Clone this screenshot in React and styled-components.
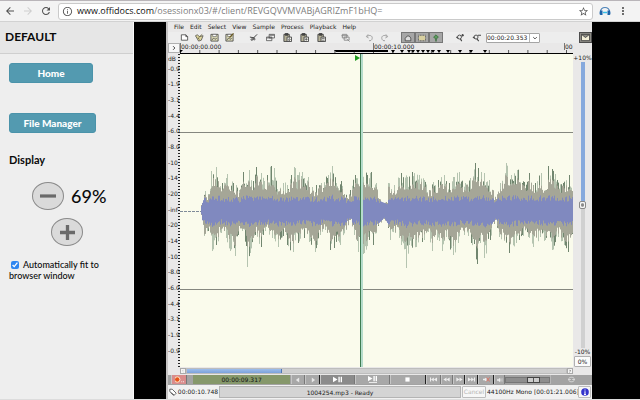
import React from 'react';
import styled, { createGlobalStyle } from 'styled-components';
import {
  MdArrowBack,
  MdArrowForward,
  MdRefresh,
  MdInfoOutline,
  MdStarBorder,
  MdMoreVert,
} from 'react-icons/md';

const GlobalStyle = createGlobalStyle`
  * {
    box-sizing: border-box;
  }

  body {
    margin: 0;
    background: #dcdcdc;
  }

  button, input, select {
    font: inherit;
    color: inherit;
    margin: 0;
    padding: 0;
  }
`;

const Page = styled.div`
  display: flex;
  flex-direction: column;
  height: 100vh;
  overflow: hidden;
  padding-bottom: 1px;
  font-family: Lato, 'Liberation Sans', sans-serif;
  color: #0a0a0a;
`;

/* ---------- browser bar ---------- */

const BrowserBar = styled.header`
  display: flex;
  align-items: center;
  flex: none;
  height: 22px;
  padding: 0 9px 0 2px;
  gap: 2px;
  background: #f3f3f3;
  border-top: 1px solid #b9b5b9;
  border-bottom: 1px solid #d2d2d2;
`;

const NavButton = styled.button`
  display: flex;
  align-items: center;
  justify-content: center;
  width: 16px;
  height: 16px;
  border: none;
  background: none;
  font-size: 12px;
  color: ${(attr) => (attr.$faded ? '#cfcfcf' : '#505050')};
`;

const AddressBox = styled.form`
  display: flex;
  align-items: center;
  flex: 1;
  height: 17px;
  margin: 0 2px;
  padding: 0 3px;
  gap: 4px;
  border: 1px solid #cacaca;
  border-radius: 3px;
  background: #fff;
  font-size: 11px;
  color: #5a5a5a;
`;

const Address = styled.a`
  flex: 1;
  font-family: 'Open Sans', 'Noto Sans', sans-serif;
  font-size: 9px;
  line-height: 14px;
  color: #7d7d7d;
  text-decoration: none;
  white-space: nowrap;
`;

const Host = styled.span`
  color: #111;
`;

/* ---------- side panel ---------- */

const Main = styled.div`
  display: flex;
  flex: 1;
  min-height: 0;
  background: #000;
`;

const SidePanel = styled.aside`
  flex: none;
  width: 134px;
  background: #eee;
  border-right: 1px solid #fafafa;
`;

const PanelTitle = styled.h1`
  margin: 0;
  padding: 0 5px;
  height: 32px;
  line-height: 29px;
  font-size: 12px;
  font-weight: 700;
  background: #e6e6e6;
  border-bottom: 1px solid #cfcfcf;
`;

const PanelBody = styled.div`
  display: flex;
  flex-direction: column;
  align-items: flex-start;
  padding: 9px 9px;
`;

const PanelButton = styled.button`
  width: ${(attr) => attr.$width};
  height: 20px;
  margin-bottom: 30px;
  border: 1px solid #4a93aa;
  border-radius: 3px;
  background: #539ab0;
  color: #fff;
  font-size: 10px;
  font-weight: 900;
`;

const SectionTitle = styled.h2`
  margin: -10px 0 15px;
  line-height: 14px;
  font-size: 11px;
  font-weight: 700;
`;

const ZoomRow = styled.div`
  display: flex;
  align-items: center;
  align-self: stretch;
  height: 28px;
  margin-bottom: 8px;
  padding-left: ${(attr) => attr.$indent};
  gap: 7px;
`;

const ZoomButton = styled.button`
  display: flex;
  align-items: center;
  justify-content: center;
  width: 32px;
  height: 28px;
  border: 1px solid #8a8a8a;
  border-radius: 50%;
  background: #dadada;
`;

const ZoomValue = styled.span`
  font-size: 18px;
  line-height: 24px;
  font-weight: 500;
`;

const FitLabel = styled.label`
  margin-top: 5px;
  font-size: 9px;
  line-height: 11px;
  font-weight: 500;
`;

const FitCheck = styled.input`
  width: 8px;
  height: 8px;
  margin: 0 4px 0 2px;
  vertical-align: -1px;
  accent-color: #2f86f0;
`;

/* ---------- audio editor ---------- */

const Editor = styled.section`
  display: flex;
  flex-direction: column;
  flex: 1;
  min-width: 0;
  margin: 0 48px 0 32px;
  background: #e9e8e8;
  border-left: 2px solid #c6c4c4;
  font-family: 'DejaVu Sans', sans-serif;
  font-size: 6px;
  line-height: 8px;
  color: #222;
`;

const MenuBar = styled.nav`
  display: flex;
  align-items: center;
  flex: none;
  height: 10px;
  padding-left: 6px;
  gap: 6px;
`;

const MenuItem = styled.button`
  border: none;
  background: none;
`;

const ToolBar = styled.div`
  display: flex;
  align-items: center;
  flex: none;
  height: 11px;
  padding-left: 9px;
  gap: 9px;
  background: #ededed;
`;

const ToolGroup = styled.div`
  display: flex;
  align-items: center;
  gap: ${(attr) => (attr.$spaced ? '2px' : '0')};
`;

const Tool = styled.button`
  display: flex;
  align-items: center;
  justify-content: center;
  width: ${(attr) => (attr.$pressed ? '14px' : '15px')};
  height: 11px;
  border: ${(attr) => (attr.$pressed ? '1px solid #777' : 'none')};
  background: ${(attr) => (attr.$pressed ? '#a6a6a6' : 'none')};
`;

const TimeSelect = styled.select`
  appearance: none;
  width: 54px;
  height: 10px;
  padding: 0;
  border: 1px solid #a5a5a5;
  border-radius: 1px;
  background: linear-gradient(#b5b5b5, #b5b5b5) 42px 0 / 1px 100% no-repeat, #fff;
`;

const SelectBox = styled.div`
  display: grid;
  align-items: center;

  & > * {
    grid-area: 1 / 1;
  }

  & > svg {
    justify-self: end;
    margin-right: 2px;
    pointer-events: none;
  }
`;

const MailTool = styled(Tool)`
  width: 13px;
  margin-left: auto;
  background: #8c8a84;
  border: 1px solid #4d4d4d;
`;

const RulerRow = styled.div`
  display: flex;
  flex: none;
  height: 11px;
`;

const RulerButton = styled.button`
  display: flex;
  align-items: center;
  justify-content: center;
  flex: none;
  width: 12px;
  height: 10px;
  border: 1px solid #b0b0b0;
  background: #f8f8f8;
`;

const Ruler = styled.div`
  display: grid;
  grid-template: 7px 3px / 193fr 191fr 9fr;
  flex: 1;
  min-width: 0;
  border-bottom: 1px solid #000;
`;

const RulerLabel = styled.span`
  min-width: 0;
  border-left: 1px solid #777;
  white-space: nowrap;
`;

const Ticks = styled.svg`
  grid-column: 1 / -1;
  width: 100%;
  height: 3px;
`;

const Corner = styled.div`
  flex: none;
  width: 19px;
`;

const Workspace = styled.div`
  display: flex;
  flex: 1;
  min-height: 0;
`;

const Scale = styled.div`
  display: flex;
  flex-direction: column;
  justify-content: space-between;
  flex: none;
  width: 12px;
  padding-bottom: 12px;
  overflow: hidden;
  white-space: nowrap;
  background: repeating-linear-gradient(#222 0 1px, transparent 1px 3px) right / 2px 100% no-repeat;
`;

const ScaleUnit = styled.span`
  margin-bottom: -6px;
  padding-top: 1px;
`;

const WaveSvg = styled.svg`
  flex: 1;
  min-width: 0;
  height: 100%;
  background: #fafbec;
`;

const SpeedColumn = styled.div`
  display: flex;
  flex-direction: column;
  align-items: center;
  flex: none;
  width: 19px;
  white-space: nowrap;
`;

const SpeedSlider = styled.input`
  appearance: none;
  writing-mode: vertical-lr;
  flex: 1;
  min-height: 0;
  width: 8px;
  background: linear-gradient(#86a9dd 50%, #d0d0d0 50%) center / 4px 100% no-repeat;

  &::-webkit-slider-thumb {
    appearance: none;
    width: 7px;
    height: 8px;
    border: 1px solid #8a8a8a;
    border-radius: 2px;
    background: radial-gradient(#888 1px, #f5f5f5 2px);
  }
`;

const SpeedButton = styled.button`
  width: 17px;
  height: 11px;
  border: 1px solid #b0b0b0;
  border-radius: 1px;
  background: #fbfbfb;
`;

const ScrollRow = styled.div`
  display: flex;
  flex: none;
  height: 8px;
  padding: 1px 19px 1px 12px;
`;

const ScrollArrow = styled.button`
  display: flex;
  align-items: center;
  justify-content: center;
  width: 6px;
  height: 6px;
  border: 1px solid #aaa;
  background: #f4f4f4;
`;

const ScrollTrack = styled.div`
  flex: 1;
  background: #cfcfcf;
  border: 1px solid #bdbdbd;
`;

const ScrollThumb = styled.div`
  width: 25%;
  height: 100%;
  background: linear-gradient(#9dbdea, #7ba2dc);
  border-right: 1px solid #4f78b4;
`;

const Transport = styled.div`
  display: flex;
  align-items: stretch;
  flex: none;
  height: 10px;
  padding: 0 0 1px 3px;
  background: #a3a3a3;
`;

const Position = styled.output`
  flex: 104;
  margin: 0 1px 0 6px;
  text-align: center;
  line-height: 9px;
  background: #86986b;
  color: #111;
`;

const TransportButton = styled.button`
  display: flex;
  align-items: center;
  justify-content: center;
  flex: ${(attr) => attr.$size};
  min-width: 0;
  border: none;
  border-right: 1px solid ${(attr) => (attr.$last ? '#222' : '#777')};
  border-left: 1px solid #c6c6c6;
  background: ${(attr) => attr.$tone || '#a8a8a8'};
`;

const Volume = styled.input`
  appearance: none;
  flex: 46;
  min-width: 0;
  height: 6px;
  align-self: center;
  border: 1px solid #777;
  background: #8e8e8e;

  &::-webkit-slider-thumb {
    appearance: none;
    width: 13px;
    height: 6px;
    border: 1px solid #444;
    background: linear-gradient(90deg, #ccc 5px, #555 5px 6px, #ccc 6px);
  }
`;

const LoopTool = styled.div`
  display: flex;
  align-items: center;
  justify-content: center;
  flex: 44;
  border-left: 1px solid #b8b8b8;
`;

const StatusBar = styled.footer`
  display: flex;
  align-items: center;
  flex: none;
  height: 14px;
  background: #f1f1f1;
  white-space: nowrap;
`;

const StatusTime = styled.span`
  display: flex;
  align-items: center;
  justify-content: center;
  gap: 1px;
  width: 51px;
`;

const StatusMessage = styled.span`
  flex: 1;
  height: 12px;
  line-height: 11px;
  text-align: center;
  background: #d4d4d4;
  border: 1px solid #b4b4b4;
`;

const StatusButton = styled.button`
  display: flex;
  align-items: center;
  justify-content: center;
  width: ${(attr) => attr.$width};
  height: 12px;
  margin: 0 1px;
  border: 1px solid #bdbdbd;
  border-radius: 1px;
  background: #f7f7f7;

  &:disabled {
    color: #b5b5b5;
  }
`;

const StatusFormat = styled.span`
  width: 90px;
  text-align: center;
`;

const menus = ['File', 'Edit', 'Select', 'View', 'Sample', 'Process', 'Playback', 'Help'];

const levels = ['-0.9', '-1.9', '-3.1', '-4.4', '-6.0', '-8.0', '-10', '-14', '-20'];

// peak height above the centre line, [x, height]
const upper = [
  [21, 6], [25, 20], [28, 17], [31, 40], [36, 44], [42, 28], [47, 37], [53, 28], [59, 21],
  [63, 39], [69, 41], [73, 30], [76, 44], [81, 38], [87, 36], [91, 45], [94, 43], [97, 22],
  [103, 28], [107, 26], [111, 36], [114, 44], [117, 36], [122, 39], [128, 34], [132, 24],
  [136, 26], [141, 28], [148, 36], [152, 45], [156, 28], [161, 30], [164, 17], [170, 21],
  [175, 36], [181, 39], [187, 36], [191, 39], [196, 28], [199, 12], [207, 8], [208, 28],
  [214, 26], [221, 38], [227, 34], [232, 39], [239, 36], [244, 31], [249, 21], [253, 29],
  [258, 31], [264, 36], [269, 28], [273, 34], [279, 39], [285, 28], [290, 33], [295, 48],
  [298, 43], [304, 38], [309, 31], [313, 21], [316, 12], [320, 28], [326, 48], [331, 36],
  [337, 41], [344, 29], [349, 38], [355, 28], [361, 38], [365, 21], [368, 45], [372, 42],
  [377, 31], [383, 28], [389, 36], [393, 33],
];

// the same below it
const lower = [
  [21, 4], [24, 25], [28, 20], [32, 40], [36, 34], [41, 22], [46, 27], [50, 40], [55, 45],
  [58, 24], [62, 20], [66, 35], [67, 56], [70, 42], [75, 24], [81, 36], [85, 20], [92, 27],
  [98, 36], [103, 25], [107, 34], [113, 41], [118, 32], [124, 27], [129, 31], [135, 41],
  [140, 24], [145, 19], [150, 39], [154, 37], [160, 34], [166, 19], [170, 9], [174, 24],
  [178, 41], [184, 42], [189, 29], [193, 34], [198, 15], [204, 8], [208, 17], [210, 29],
  [215, 22], [221, 34], [225, 38], [226, 57], [229, 34], [236, 36], [244, 29], [248, 21],
  [252, 40], [257, 29], [262, 40], [266, 26], [273, 44], [278, 32], [284, 24], [291, 32],
  [297, 53], [300, 32], [304, 47], [310, 29], [315, 9], [319, 26], [329, 42], [336, 32],
  [342, 24], [348, 26], [353, 36], [360, 26], [365, 29], [372, 39], [378, 26], [384, 34],
  [388, 41], [393, 26],
];

const CENTRE = 157;

function noise(n) {
  const v = Math.sin(n * 127.1 + 11.7) * 43758.5453;
  return v - Math.floor(v);
}

function heightAt(points, x) {
  const i = points.findIndex((p) => p[0] >= x);
  if (i < 1) return points[0][1];
  const [x0, y0] = points[i - 1];
  const [x1, y1] = points[i];
  return y0 + ((y1 - y0) * (x - x0)) / (x1 - x0);
}

function buildWave() {
  const wave = { dark: '', light: '', body: '', rms: '' };
  for (let x = 21; x < 393; x += 1) {
    [upper, lower].forEach((points, side) => {
      const sign = side ? 1 : -1;
      const seed = x * 2 + side * 1000;
      const top = heightAt(points, x);
      const listed = points.some((p) => p[0] === x);
      const peak = listed ? top : top * (0.58 + noise(seed) ** 1.4 * 0.48);
      const block = Math.floor(x / 2) * 3 + side * 777;
      const body = Math.min(peak, 7 + top * (0.38 + noise(block) * 0.28));
      const rms = Math.min(top * 0.85, 6 + top * 0.1 + noise(seed + 0.7) * 6);
      const line = (h) => `M${x + 0.5} ${CENTRE}V${(CENTRE + sign * h).toFixed(1)}`;
      wave[noise(seed + 0.5) > 0.65 ? 'dark' : 'light'] += line(peak);
      wave.body += line(body);
      wave.rms += line(rms);
    });
  }
  return wave;
}

const wave = buildWave();

function Waveform() {
  return (
    <WaveSvg viewBox="0 0 393 313" preserveAspectRatio="none">
      <path d="M0 78.5H393M0 235.5H393" stroke="#85877f" />
      <path d="M0 157.5H21" stroke="#7f8b99" strokeDasharray="3 1" />
      <path d={wave.light} stroke="#b5c4b0" />
      <path d={wave.dark} stroke="#71866f" />
      <path d={wave.body} stroke="#a5a697" />
      <path d={wave.rms} stroke="#8089bf" />
      <path d="M180.5 0V313" stroke="#3f7d52" />
      <path d="M182 0V313" stroke="#b5dccb" strokeWidth="2" />
      <path d="M175 1L180 4L175 7Z" fill="#1f9a1f" />
    </WaveSvg>
  );
}

const beats = [213, 222, 229, 233, 238, 243, 248, 253, 259, 268, 280, 291, 305];

function RulerTicks() {
  const ticks = Array.from({ length: 21 }, (_, i) => `M${i * 19.3 + 0.5} 0V3`).join('');
  return (
    <Ticks viewBox="0 0 393 3" preserveAspectRatio="none">
      <path d={ticks} stroke="#555" />
      <path d="M0 0H3L0 3Z M154 0H208V2H156Z" fill="#000" />
      <path d={beats.map((x) => `M${x - 2} 0H${x + 2}L${x} 3Z`).join('')} fill="#000" />
    </Ticks>
  );
}

/* ---------- icons ---------- */

const Icon = styled.svg`
  display: block;
  flex: none;
  fill: none;
  stroke: ${(attr) => attr.$color || '#444'};
`;

function PasteShape({ mark }) {
  return (
    <>
      <path d="M1 1.5H7V9.5H1Z" fill="#b5b197" />
      <path d="M2.5 0.5H5.5V2.5H2.5Z" fill="#444" />
      <path d="M4.5 4.5H9.5V9.5H4.5Z" fill="#f4f4ee" />
      <path d={mark} strokeWidth="0.8" />
    </>
  );
}

function DiskShape({ mark }) {
  return (
    <>
      <path d="M1 1.5H9V9H1Z" fill="#dedcb8" strokeWidth="0.9" />
      <path d="M3 1.5H7V4H3Z" fill="#fff" strokeWidth="0.6" />
      <path d="M2 8L4 5.5L5.5 7L7.5 6" strokeWidth="0.8" />
      {mark && <path d="M5 5L9.5 0.5" stroke="#6b5a20" strokeWidth="1.3" />}
    </>
  );
}

const shapes = {
  new: <path d="M1.5 2H6.5L8.5 4V8H1.5ZM6.5 2V4H8.5" fill="#fff" strokeWidth="0.9" />,
  open: (
    <>
      <path d="M0.5 3L2.5 2L5 4L9 3L7 8L4 9Z" fill="#ded69c" strokeWidth="0.8" />
      <path d="M4 5L8 1.5M3 5.5L5 7" stroke="#6f6a45" />
    </>
  ),
  save: <DiskShape />,
  saveAs: <DiskShape mark />,
  cut: (
    <>
      <path d="M9 1.5L4 6.5M1 4.5L6 5.5" strokeWidth="1.1" />
      <circle cx="3.2" cy="7.3" r="0.9" />
      <circle cx="5.8" cy="6.8" r="0.9" />
    </>
  ),
  copy: <path d="M3.5 1.5H9.5V5.5H3.5ZM0.5 4.5H6.5V8.5H0.5ZM1 5.5H6M4 2.5H9" fill="#eee" strokeWidth="0.8" />,
  pasteInsert: <PasteShape mark="M7 5V8.5M5.5 7L7 8.5L8.5 7" />,
  pasteOver: <PasteShape mark="M5.5 7H8.5M7 5.5V8.5" />,
  pasteMix: <PasteShape mark="M5.5 6H8.5M5.5 8H8.5" />,
  crop: (
    <>
      <path d="M1.5 1.5H6.5V5.5H1.5ZM0.5 3H8M3.5 4.5H9V8H3.5Z" stroke="#888" />
      <path d="M7 7L9.5 9.5" stroke="#888" />
    </>
  ),
  undo: <path d="M3.5 1.5L1.5 4L4 5.5M2 4C5 1.5 8.5 3 8 6C7.7 8 6 9 4.5 8.5" />,
  redo: <path d="M6.5 1.5L8.5 4L6 5.5M8 4C5 1.5 1.5 3 2 6C2.3 8 4 9 5.5 8.5" />,
  shape: <path d="M1.5 8.5V5.5L4 2.5H6.5L8.5 5V8.5Z" fill="#ddd" />,
  region: (
    <>
      <path d="M1 2H9V8H1Z" fill="#d8d0a0" stroke="none" />
      <path d="M0.5 1.5H9.5V8.5H0.5Z" strokeDasharray="1 1" />
    </>
  ),
  follow: (
    <>
      <path d="M5 1L8 4L5.5 6H4.5L2 4Z" fill="#5d9a5f" stroke="#27632b" strokeWidth="0.8" />
      <path d="M5 6V9.5" stroke="#27632b" strokeWidth="1.5" />
    </>
  ),
  zoomIn: (
    <>
      <circle cx="5" cy="4.5" r="2.2" />
      <path d="M3.5 6L1.5 4.5M6 6.5L7.5 9M7 2.5H10M8.5 1V4" strokeWidth="1.2" />
    </>
  ),
  zoomOut: (
    <>
      <circle cx="4.5" cy="4.5" r="2.2" />
      <path d="M3 6L1 4.5M5.5 6.5L7.5 9M6.5 2.5H10" strokeWidth="1.2" />
    </>
  ),
  mail: <path d="M0.5 1.5H9.5V8.5H0.5ZM0.5 1.5L5 5L9.5 1.5" fill="#f2eed6" />,
  down: <path d="M2 3.5L5 6.5L8 3.5" strokeWidth="1.5" />,
  right: <path d="M3.5 2L6.5 5L3.5 8" strokeWidth="1.6" />,
  left: <path d="M6.5 2L3.5 5L6.5 8" strokeWidth="1.2" />,
  minus: <path d="M0 5H10" strokeWidth="2" />,
  plus: <path d="M0 5H10M5 0V10" strokeWidth="2.2" />,
  tag: <path d="M1 1.5H4L9 6.5L6.5 9L1 4.5ZM2.5 6L6 9.5" fill="#fff" />,
  record: (
    <>
      <circle cx="2.5" cy="5" r="3" fill="#e8541c" stroke="#fff4d0" />
      <path d="M7 7.5H10" stroke="#fff" strokeDasharray="1 1" />
    </>
  ),
  playPause: <path d="M0 2L5 5L0 8ZM6 2H7.5V8H6ZM8.5 2H10V8H8.5Z" fill="#fff" stroke="none" />,
  playRange: (
    <path d="M0 1L5 4L0 7ZM6 1H7.5V7H6ZM8.5 1H10V7H8.5ZM1 8H10V9H1Z" fill="#fff" stroke="none" />
  ),
  stop: <path d="M2 2H8V8H2Z" fill="#fff" stroke="none" />,
  first: <path d="M0 2H1.5V8H0ZM5.5 2V8L1.5 5ZM10 2V8L5.5 5Z" fill="#eee" stroke="none" />,
  back: <path d="M5 2V8L0.5 5ZM9.5 2V8L5 5Z" fill="#eee" stroke="none" />,
  forward: <path d="M0.5 2V8L5 5ZM5 2V8L9.5 5Z" fill="#eee" stroke="none" />,
  last: <path d="M0 2V8L4.5 5ZM4.5 2V8L8.5 5ZM8.5 2H10V8H8.5Z" fill="#eee" stroke="none" />,
  prevMark: <path d="M7 1V9L1.5 5Z" fill="#e8e8e8" stroke="none" />,
  nextMark: <path d="M3 1V9L8.5 5Z" fill="#e8e8e8" stroke="none" />,
  mute: (
    <>
      <path d="M0 4H2L5 2V8L2 6H0Z" fill="#eee" stroke="none" />
      <path d="M5 2L9.5 8M9.5 2L5 8" stroke="#e0705f" strokeWidth="1.2" />
    </>
  ),
  speaker: <path d="M0 4H2L5 2V8L2 6H0ZM6.5 3V7M8.5 2V8" fill="#eee" stroke="#eee" strokeWidth="0.8" />,
  loop: <path d="M1 4C2 1 8 1 9 4M9 6C8 9 2 9 1 6M0 5H4M6 5H10" />,
  info: (
    <>
      <circle cx="5" cy="5" r="4.8" fill="#3434cc" stroke="none" />
      <path d="M5 1.8V3.2M5 4.2V8M3.8 8H6.2" strokeWidth="1.3" />
    </>
  ),
};

function Glyph({ name, size = 9, color }) {
  return (
    <Icon viewBox="0 0 10 10" width={size} height={size} $color={color} aria-hidden="true">
      {shapes[name]}
    </Icon>
  );
}

function Headphones() {
  return (
    <svg viewBox="0 0 12 10" width="12" height="10" fill="none">
      <path d="M1.5 6C1 0 11 0 10.5 6" stroke="#4c83b8" strokeWidth="1.2" />
      <path d="M1 4.5H3.5V9H1.5Q0.5 9 0.5 7ZM8.5 4.5H11L11.5 7Q11.5 9 10.5 9H8.5Z" fill="#1b62a8" />
      <path d="M4 6.5H8" stroke="#38c0e8" strokeWidth="1.5" />
    </svg>
  );
}

function Tools({ names, pressed, spaced }) {
  return (
    <ToolGroup $spaced={spaced}>
      {names.map((name) => (
        <Tool key={name} aria-label={name} $pressed={pressed}>
          <Glyph name={name} size={pressed ? 8 : 9} color={/do$/.test(name) ? '#999' : undefined} />
        </Tool>
      ))}
    </ToolGroup>
  );
}

function EditorWindow() {
  return (
    <Editor>
      <MenuBar>
        {menus.map((name) => <MenuItem key={name}>{name}</MenuItem>)}
      </MenuBar>
      <ToolBar>
        <Tools names={['new', 'open', 'save', 'saveAs']} />
        <Tools names={['cut', 'copy', 'pasteInsert', 'pasteOver', 'pasteMix']} spaced />
        <Tools names={['crop']} />
        <Tools names={['undo', 'redo']} />
        <Tools names={['shape', 'region', 'follow']} pressed />
        <ToolGroup $spaced>
          <Tools names={['zoomIn', 'zoomOut']} spaced />
          <SelectBox>
            <TimeSelect aria-label="Visible time">
              <option>00:00:20.353</option>
            </TimeSelect>
            <Glyph name="down" size={6} />
          </SelectBox>
        </ToolGroup>
        <MailTool aria-label="Mail"><Glyph name="mail" /></MailTool>
      </ToolBar>
      <RulerRow>
        <RulerButton aria-label="Show more"><Glyph name="right" size={6} /></RulerButton>
        <Ruler>
          <RulerLabel>00:00:00.000</RulerLabel>
          <RulerLabel>00:00:10.000</RulerLabel>
          <RulerLabel>00</RulerLabel>
          <RulerTicks />
        </Ruler>
        <Corner />
      </RulerRow>
      <Workspace>
        <Scale>
          <ScaleUnit>dB</ScaleUnit>
          {levels.map((level) => <span key={level}>{level}</span>)}
          <span>-inf</span>
          {[...levels].reverse().map((level) => <span key={level}>{level}</span>)}
        </Scale>
        <Waveform />
        <SpeedColumn>
          <span>+10%</span>
          <SpeedSlider type="range" min="-10" max="10" defaultValue="0" aria-label="Speed" />
          <span>-10%</span>
          <SpeedButton>0%</SpeedButton>
        </SpeedColumn>
      </Workspace>
      <ScrollRow>
        <ScrollArrow aria-label="Scroll left"><Glyph name="left" size={4} color="#aaa" /></ScrollArrow>
        <ScrollTrack><ScrollThumb /></ScrollTrack>
        <ScrollArrow aria-label="Scroll right"><Glyph name="right" size={4} /></ScrollArrow>
      </ScrollRow>
      <Transport>
        <TransportButton $size={15} $tone="#d98c8c" aria-label="Record"><Glyph name="record" /></TransportButton>
        <Position>00:00:09.317</Position>
        <TransportButton $size={13} aria-label="Previous mark"><Glyph name="prevMark" size={6} /></TransportButton>
        <TransportButton $size={14} $last aria-label="Next mark"><Glyph name="nextMark" size={6} /></TransportButton>
        <TransportButton $size={35} $tone="#8b8b8b" aria-label="Play"><Glyph name="playPause" /></TransportButton>
        <TransportButton $size={35} aria-label="Play selection"><Glyph name="playRange" /></TransportButton>
        <TransportButton $size={36} $last aria-label="Stop"><Glyph name="stop" size={7} /></TransportButton>
        <TransportButton $size={14} aria-label="To start"><Glyph name="first" size={7} /></TransportButton>
        <TransportButton $size={11} aria-label="Back"><Glyph name="back" size={7} /></TransportButton>
        <TransportButton $size={11} $last aria-label="Forward"><Glyph name="forward" size={7} /></TransportButton>
        <TransportButton $size={12} $last aria-label="To end"><Glyph name="last" size={7} /></TransportButton>
        <TransportButton $size={15} $last aria-label="Mute"><Glyph name="mute" size={7} /></TransportButton>
        <TransportButton $size={9} aria-label="Volume"><Glyph name="speaker" size={6} /></TransportButton>
        <Volume type="range" defaultValue="70" aria-label="Volume level" />
        <LoopTool><Glyph name="loop" size={7} color="#eee" /></LoopTool>
      </Transport>
      <StatusBar>
        <StatusTime><Glyph name="tag" size={8} />00:00:10.748</StatusTime>
        <StatusMessage>1004254.mp3 - Ready</StatusMessage>
        <StatusButton $width="24px" disabled>Cancel</StatusButton>
        <StatusFormat>44100Hz Mono [00:01:21.006]</StatusFormat>
        <StatusButton $width="13px" aria-label="Info"><Glyph name="info" size={8} color="#fff" /></StatusButton>
      </StatusBar>
    </Editor>
  );
}

export default function App() {
  const [fit, setFit] = React.useState(true);

  return (
    <Page>
      <GlobalStyle />
      <BrowserBar>
        <NavButton aria-label="Back"><MdArrowBack /></NavButton>
        <NavButton aria-label="Forward" $faded><MdArrowForward /></NavButton>
        <NavButton aria-label="Reload"><MdRefresh /></NavButton>
        <AddressBox>
          <MdInfoOutline />
          <Address href="#/client">
            <Host>www.offidocs.com</Host>
            /osessionx03/#/client/REVGQVVMVABjAGRIZmF1bHQ=
          </Address>
          <MdStarBorder />
        </AddressBox>
        <NavButton aria-label="Audio extension"><Headphones /></NavButton>
        <NavButton aria-label="Menu"><MdMoreVert /></NavButton>
      </BrowserBar>
      <Main>
        <SidePanel>
          <PanelTitle>DEFAULT</PanelTitle>
          <PanelBody>
            <PanelButton $width="84px">Home</PanelButton>
            <PanelButton $width="87px">File Manager</PanelButton>
            <SectionTitle>Display</SectionTitle>
            <ZoomRow $indent="23px">
              <ZoomButton aria-label="Zoom out"><Glyph name="minus" size={16} color="#6a6a6a" /></ZoomButton>
              <ZoomValue>69%</ZoomValue>
            </ZoomRow>
            <ZoomRow $indent="42px">
              <ZoomButton aria-label="Zoom in"><Glyph name="plus" size={15} color="#6a6a6a" /></ZoomButton>
            </ZoomRow>
            <FitLabel>
              <FitCheck type="checkbox" checked={fit} onChange={() => setFit(!fit)} />
              Automatically fit to browser window
            </FitLabel>
          </PanelBody>
        </SidePanel>
        <EditorWindow />
      </Main>
    </Page>
  );
}
